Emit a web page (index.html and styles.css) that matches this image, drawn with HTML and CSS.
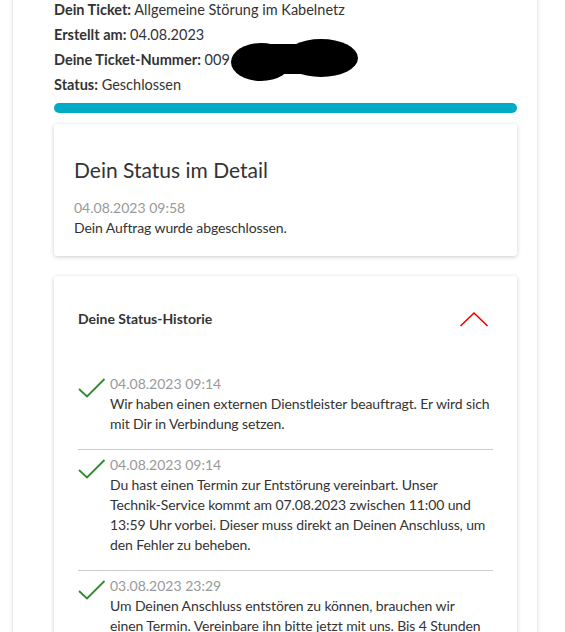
FILE: index.html
```html
<!DOCTYPE html>
<html lang="de">
<head>
<meta charset="utf-8">
<link rel="stylesheet" href="styles.css">
</head>
<body>
<div class="page">
  <div class="outer">
    <div class="info">
      <p><b>Dein Ticket:</b> Allgemeine Störung im Kabelnetz</p>
      <p><b>Erstellt am:</b> 04.08.2023</p>
      <p><b>Deine Ticket-Nummer:</b> 009<span class="redact"><svg class="blob" width="128" height="44" viewBox="0 0 128 44"><ellipse cx="30" cy="24" rx="30" ry="19" fill="#000"/><ellipse cx="90" cy="20" rx="37" ry="19" fill="#000"/><rect x="28" y="6" width="62" height="30" fill="#000"/></svg></span></p>
      <p><b>Status:</b> Geschlossen</p>
    </div>
    <div class="progress"></div>
    <div class="card detail">
      <h2>Dein Status im Detail</h2>
      <div class="date">04.08.2023 09:58</div>
      <div class="text">Dein Auftrag wurde abgeschlossen.</div>
    </div>
    <div class="card history">
      <div class="hist-head">
        <h3>Deine Status-Historie</h3>
        <svg class="chev" width="30" height="16" viewBox="0 0 30 16"><path d="M1.5 15 L15 2 L28.5 15" fill="none" stroke="#ee0000" stroke-width="1.6"/></svg>
      </div>
      <ul class="items">
        <li class="item">
          <svg class="check" width="28" height="22" viewBox="0 0 28 22"><path d="M1 12 L9 19.5 L26.5 2" fill="none" stroke="#2e8b2e" stroke-width="1.8"/></svg>
          <div class="body">
            <div class="date">04.08.2023 09:14</div>
            <div class="text">Wir haben einen externen Dienstleister beauftragt. Er wird sich<br>mit Dir in Verbindung setzen.</div>
          </div>
        </li>
        <li class="item">
          <svg class="check" width="28" height="22" viewBox="0 0 28 22"><path d="M1 12 L9 19.5 L26.5 2" fill="none" stroke="#2e8b2e" stroke-width="1.8"/></svg>
          <div class="body">
            <div class="date">04.08.2023 09:14</div>
            <div class="text">Du hast einen Termin zur Entstörung vereinbart. Unser<br>Technik-Service kommt am 07.08.2023 zwischen 11:00 und<br>13:59 Uhr vorbei. Dieser muss direkt an Deinen Anschluss, um<br>den Fehler zu beheben.</div>
          </div>
        </li>
        <li class="item">
          <svg class="check" width="28" height="22" viewBox="0 0 28 22"><path d="M1 12 L9 19.5 L26.5 2" fill="none" stroke="#2e8b2e" stroke-width="1.8"/></svg>
          <div class="body">
            <div class="date">03.08.2023 23:29</div>
            <div class="text">Um Deinen Anschluss entstören zu können, brauchen wir<br>einen Termin. Vereinbare ihn bitte jetzt mit uns. Bis 4 Stunden<br>vorher kannst Du ihn noch ändern.</div>
          </div>
        </li>
      </ul>
    </div>
  </div>
</div>
</body>
</html>
```

FILE: styles.css
```css
* { box-sizing: border-box; }
html, body { margin: 0; padding: 0; background: #fff; }
body {
  font-family: "Lato", "Liberation Sans", sans-serif;
  color: #333;
  font-size: 14px;
  overflow: hidden;
  height: 632px;
}
.page {
  padding: 0 28px 0 13px;
  margin-top: -23px;
}
.outer {
  background: #fff;
  box-shadow: 0 0 4px rgba(0,0,0,0.18);
  padding: 20px 20px 0 41px;
  min-height: 700px;
}
.info p {
  margin: 0;
  line-height: 25px;
  font-size: 14.5px;
}
.info b { font-weight: 700; }
.redact {
  position: relative;
  display: inline-block;
  width: 0;
  height: 0;
}
.blob {
  position: absolute;
  left: 1px;
  top: -27px;
}
.progress {
  height: 10px;
  background: #00abc6;
  border-radius: 5px;
  margin-top: 6px;
}
.card {
  background: #fff;
  border-radius: 3px;
  box-shadow: 0 1px 4px rgba(0,0,0,0.2);
}
.detail {
  margin-top: 11px;
  padding: 33px 20px 18px 20px;
}
.detail h2 {
  margin: 0 0 15px;
  font-weight: 400;
  font-size: 21px;
  line-height: 26px;
  color: #333;
}
.date {
  color: #999;
  font-size: 14px;
  line-height: 20px;
}
.text {
  font-size: 14px;
  line-height: 20px;
  color: #333;
  letter-spacing: -0.1px;
}
.history {
  margin-top: 20px;
  padding: 30px 24px 0 24px;
}
.hist-head {
  display: flex;
  align-items: center;
  justify-content: space-between;
  padding-right: 4px;
}
.hist-head h3 {
  margin: 0;
  font-size: 14px;
  font-weight: 700;
  line-height: 26px;
}
.items {
  list-style: none;
  margin: 42px 0 0;
  padding: 0;
}
.item {
  display: flex;
  gap: 4px;
  padding: 5px 0 15px;
  border-top: 1px solid #ccc;
}
.item:first-child { border-top: none; padding-top: 0; }
.check { flex: none; margin-top: 3px; }
.body { flex: 1; }
```
